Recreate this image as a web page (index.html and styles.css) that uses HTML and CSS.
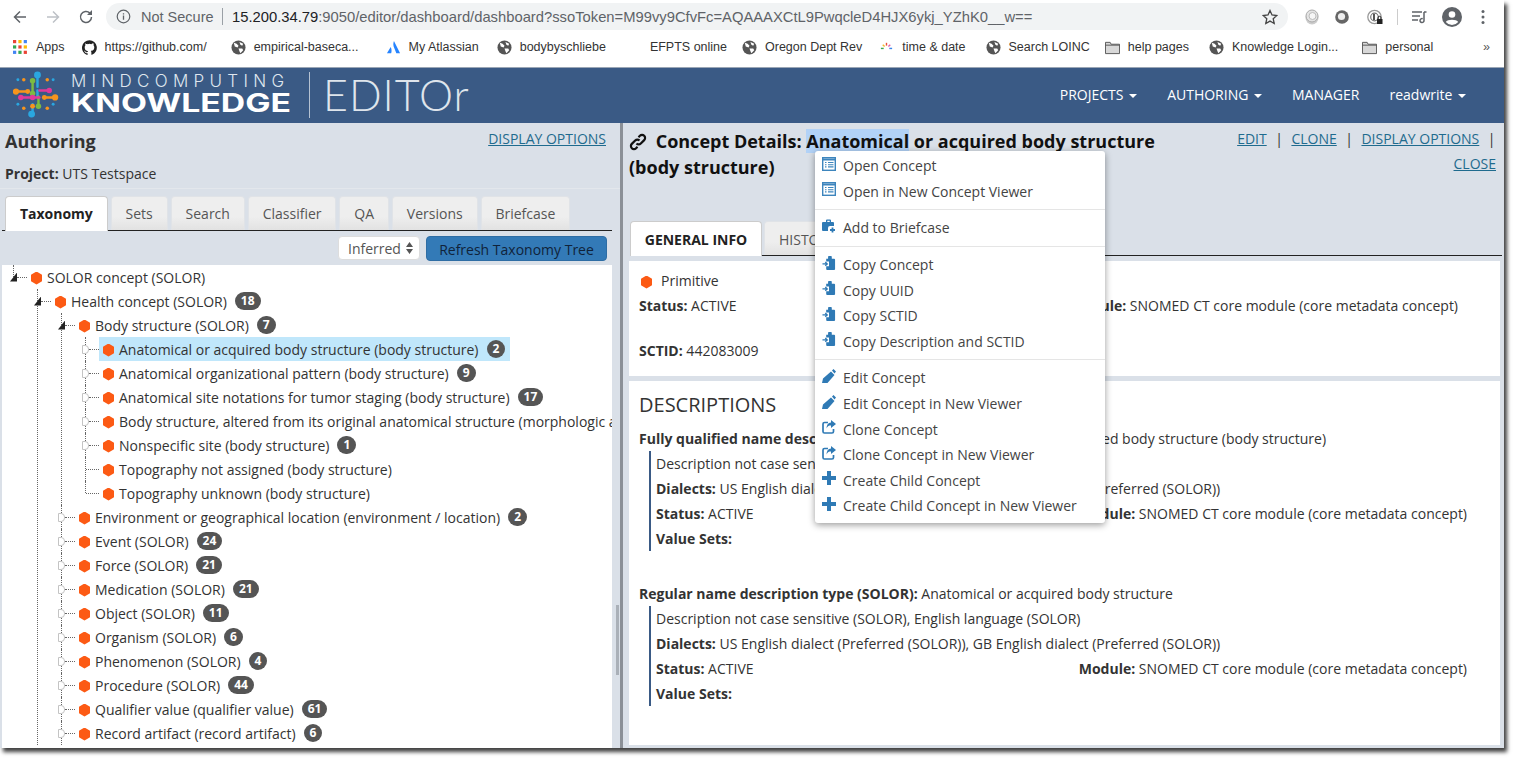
FILE: index.html
```html
<!DOCTYPE html>
<html lang="en">
<head>
  <meta charset="UTF-8">
  <meta name="viewport" content="width=device-width, initial-scale=1">
  <title>Knowledge Editor - Authoring</title>
  <link rel="stylesheet" href="styles.css">
</head>
<body>
  <svg class="defs" width="0" height="0">
    <symbol id="i-globe" viewBox="0 0 16 16">
      <circle cx="8" cy="8" r="7.500" fill="#555"/>
      <path d="M3 3l3 1 2 2-1 2-3-1zM9 2l4 2-1 2-2-1zM8 9l4 0 1 2-3 3-1-2z" fill="#fff"/>
    </symbol>
    <symbol id="i-folder" viewBox="0 0 16 14">
      <path d="M.5 1.500h5l1 2h9v10H.5z" fill="#d8d8d8" stroke="#555"/>
      <path d="M.5 4.500h15" stroke="#555"/>
    </symbol>
    <symbol id="i-list" viewBox="0 0 14 14">
      <rect x=".7" y=".7" width="12.600" height="12.600" fill="#fff" stroke="#3d85bd" stroke-width="1.400"/>
      <path d="M1 1.500h12v2H1z" fill="#3d85bd"/>
      <path d="M3 5.500h1.500M3 7.700h1.500M3 9.900h1.500M6 5.500h5.500M6 7.700h5.500M6 9.900h5.500" stroke="#3d85bd" stroke-width="1.100"/>
    </symbol>
    <symbol id="i-case" viewBox="0 0 14 14">
      <path d="M4 3V1.500a1 1 0 0 1 1-1h3a1 1 0 0 1 1 1V3h2a1 1 0 0 1 1 1v3H8a2 2 0 0 0-2 2v3H1a1 1 0 0 1-1-1V4a1 1 0 0 1 1-1zM5.300 3h2.400V1.800H5.300z" fill="#2f7ab5"/>
      <path d="M10.500 8.500v5M8 11h5" stroke="#2f7ab5" stroke-width="1.800"/>
    </symbol>
    <symbol id="i-copy" viewBox="0 0 14 15">
      <path d="M4 3h2V1.500a2 2 0 0 1 4 0V3h2.500a1 1 0 0 1 1 1v10a1 1 0 0 1-1 1H5a1 1 0 0 1-1-1v-3h3V6H4z" fill="#2f7ab5"/>
      <path d="M0 8.500h4.500M3 6.500l2.200 2-2.200 2" fill="none" stroke="#2f7ab5" stroke-width="1.300"/>
    </symbol>
    <symbol id="i-pencil" viewBox="0 0 14 14">
      <path d="M0 14l1-4.500 8-7 3.500 3.500-7 8zM10 1.500l1.500-1.500 2.500 2.500-1.500 2z" fill="#2f7ab5"/>
    </symbol>
    <symbol id="i-clone" viewBox="0 0 14 14">
      <path d="M11.500 9v2.500a1.500 1.500 0 0 1-1.500 1.500H2.500A1.500 1.500 0 0 1 1 11.500V4a1.500 1.500 0 0 1 1.500-1.500H6" fill="none" stroke="#2f7ab5" stroke-width="1.700"/>
      <path d="M9 0l5 4-5 4V5.500c-2 0-3.500.5-4.500 3C4.500 5 6 2.800 9 2.500z" fill="#2f7ab5"/>
    </symbol>
    <symbol id="i-plus" viewBox="0 0 14 14">
      <path d="M5 0h4v5h5v4H9v5H5V9H0V5h5z" fill="#2f7ab5"/>
    </symbol>
  </svg>

  <div class="window">
    <div class="toolbar">
      <svg class="tb-btn" viewBox="0 0 16 16"><path d="M14 8H3M8 2.500L2.500 8 8 13.500" fill="none" stroke="#5f6368" stroke-width="1.500"/></svg>
      <svg class="tb-btn" viewBox="0 0 16 16"><path d="M2 8h11M8 2.500L13.500 8 8 13.500" fill="none" stroke="#bdc1c6" stroke-width="1.500"/></svg>
      <svg class="tb-btn" viewBox="0 0 16 16"><path d="M13.500 8a5.500 5.500 0 1 1-1.600-3.900" fill="none" stroke="#5f6368" stroke-width="1.500"/><path d="M14 1v5H9z" fill="#5f6368"/></svg>
      <div class="omnibox">
        <svg class="omni-info" viewBox="0 0 16 16"><circle cx="8" cy="8" r="6.700" fill="none" stroke="#5f6368" stroke-width="1.300"/><path d="M8 7v4.500M8 4.500v1.300" stroke="#5f6368" stroke-width="1.400"/></svg>
        <span class="not-secure">Not Secure</span>
        <span class="omni-sep"></span>
        <span class="url"><b>15.200.34.79</b>:9050/editor/dashboard/dashboard?ssoToken=M99vy9CfvFc=AQAAAXCtL9PwqcleD4HJX6ykj_YZhK0__w==</span>
        <svg class="omni-star" viewBox="0 0 16 16"><path d="M8 1.500l2 4.500 4.800.5-3.600 3.200 1 4.800L8 12.100 3.800 14.500l1-4.800L1.200 6.500 6 6z" fill="none" stroke="#444" stroke-width="1.300"/></svg>
      </div>
      <div class="tb-right">
        <svg class="ext" viewBox="0 0 16 16"><circle cx="8" cy="9" r="6.500" fill="#ccc"/><circle cx="8" cy="7" r="6" fill="#e4e4e4" stroke="#aaa"/><circle cx="8.500" cy="7" r="3.500" fill="#f6f6f6" stroke="#bbb"/></svg>
        <svg class="ext ext-gap" viewBox="0 0 16 16"><circle cx="8" cy="8" r="6.800" fill="#666"/><circle cx="7.500" cy="7.500" r="3.600" fill="#eee"/></svg>
        <svg class="ext" viewBox="0 0 16 16"><circle cx="7.500" cy="8" r="6.700" fill="none" stroke="#999" stroke-width="1.300"/><circle cx="7.500" cy="8" r="3.800" fill="none" stroke="#777" stroke-width="1.200"/><path d="M7 5v6" stroke="#444" stroke-width="1.800"/><path d="M11 10V8.800a1.500 1.500 0 0 1 3 0V10" fill="none" stroke="#222"/><rect x="10" y="10" width="5.500" height="5" fill="#222"/></svg>
        <span class="tb-sep"></span>
        <svg class="ext ext-queue" viewBox="0 0 16 16"><path d="M1 3h10M1 7h8M1 11h6" stroke="#5f6368" stroke-width="1.500"/><path d="M13 3v8.500a2 2 0 1 1-1.300-1.800M13 3h2.500" fill="none" stroke="#5f6368" stroke-width="1.500"/></svg>
        <svg class="avatar" viewBox="0 0 20 20"><circle cx="10" cy="10" r="10" fill="#5f6368"/><circle cx="10" cy="7.500" r="3.300" fill="#fff"/><path d="M3.800 15c1.500-3 10.900-3 12.400 0a8 8 0 0 1-12.400 0z" fill="#fff"/></svg>
        <svg class="dots" viewBox="0 0 4 16"><circle cx="2" cy="2.500" r="1.500" fill="#5f6368"/><circle cx="2" cy="8" r="1.500" fill="#5f6368"/><circle cx="2" cy="13.500" r="1.500" fill="#5f6368"/></svg>
      </div>
    </div>

    <div class="bookmarks">
      <a class="bm"><svg class="bm-icon" viewBox="0 0 14 14"><path d="M0 0h3v3H0z" fill="#ea4335"/><path d="M5 0h3v3H5z" fill="#fbbc05"/><path d="M10 0h3v3h-3z" fill="#4285f4"/><path d="M0 5h3v3H0z" fill="#34a853"/><path d="M5 5h3v3H5z" fill="#ea4335"/><path d="M10 5h3v3h-3z" fill="#fbbc05"/><path d="M0 10h3v3H0z" fill="#4285f4"/><path d="M5 10h3v3H5z" fill="#34a853"/><path d="M10 10h3v3h-3z" fill="#ea4335"/></svg>Apps</a>
      <a class="bm"><svg class="bm-icon" viewBox="0 0 16 16"><path d="M8 .3a8 8 0 0 0-2.500 15.600c.4 0 .5-.2.500-.4v-1.400c-2.200.5-2.700-1-2.700-1-.4-.9-.9-1.200-.9-1.200-.7-.5.100-.5.100-.5.800.1 1.200.8 1.200.8.700 1.200 1.900.9 2.300.7.100-.5.300-.9.500-1.100-1.800-.2-3.600-.9-3.600-4 0-.9.300-1.600.8-2.100-.1-.2-.4-1 .1-2.100 0 0 .7-.2 2.200.8a7.500 7.500 0 0 1 4 0c1.500-1 2.200-.8 2.200-.8.400 1.100.2 1.900.1 2.100.5.600.8 1.300.8 2.100 0 3.100-1.900 3.700-3.700 3.900.3.300.6.700.6 1.500v2.200c0 .2.100.5.600.4A8 8 0 0 0 8 .3z" fill="#222"/></svg>https://github.com/</a>
      <a class="bm"><svg class="bm-icon"><use href="#i-globe"/></svg>empirical-baseca...</a>
      <a class="bm"><svg class="bm-icon" viewBox="0 0 16 16"><path d="M8.500 1c-1 2.500-1 5 .5 8l2 5h4zM5 7.500L1 14h4.500c.8-1.800.5-4.500-.5-6.500z" fill="#2684ff"/></svg>My Atlassian</a>
      <a class="bm"><svg class="bm-icon"><use href="#i-globe"/></svg>bodybyschliebe</a>
      <a class="bm bm-plain">EFPTS online</a>
      <a class="bm"><svg class="bm-icon"><use href="#i-globe"/></svg>Oregon Dept Rev</a>
      <a class="bm"><svg class="bm-icon" viewBox="0 0 16 16"><path d="M8 3v3" stroke="#e8503a" stroke-width="1.500"/><path d="M4 5l2 2" stroke="#f5b92e" stroke-width="1.500"/><path d="M12 5l-2 2" stroke="#e25db0" stroke-width="1.500"/><path d="M2 9h3" stroke="#3aa757" stroke-width="1.500"/><path d="M11 9h3" stroke="#3a85e8" stroke-width="1.500"/></svg>time &amp; date</a>
      <a class="bm"><svg class="bm-icon"><use href="#i-globe"/></svg>Search LOINC</a>
      <a class="bm"><svg class="bm-icon"><use href="#i-folder"/></svg>help pages</a>
      <a class="bm"><svg class="bm-icon"><use href="#i-globe"/></svg>Knowledge Login...</a>
      <a class="bm"><svg class="bm-icon"><use href="#i-folder"/></svg>personal</a>
      <span class="bm-more">»</span>
    </div>

    <nav class="navbar">
      <div class="brand">
        <svg class="brand-mark" viewBox="0 0 48 48">
          <g stroke-linecap="round" fill="none">
            <path d="M25 4v12M25 20v6" stroke="#2aa7e0" stroke-width="2.500"/>
            <path d="M20 10v13" stroke="#7dbb42" stroke-width="2.500"/>
            <path d="M26 26v10" stroke="#7dbb42" stroke-width="2.500"/>
            <path d="M3 21h12" stroke="#f7941d" stroke-width="2.500"/>
            <path d="M32 27h11" stroke="#f7941d" stroke-width="2.500"/>
            <path d="M8 27h12M27 20h10M20 27h7" stroke="#e0389a" stroke-width="2.500"/>
            <path d="M20 34v10" stroke="#2aa7e0" stroke-width="2.500"/>
          </g>
          <circle cx="25" cy="4" r="3.500" fill="#2aa7e0"/>
          <circle cx="20" cy="10" r="2.800" fill="#7dbb42"/>
          <circle cx="20" cy="23" r="2.800" fill="#7dbb42"/>
          <circle cx="26" cy="36" r="2.800" fill="#7dbb42"/>
          <circle cx="3" cy="21" r="3.200" fill="#f7941d"/>
          <circle cx="15" cy="21" r="2.500" fill="#f7941d"/>
          <circle cx="43" cy="27" r="3.200" fill="#f7941d"/>
          <circle cx="32" cy="27" r="2.500" fill="#f7941d"/>
          <circle cx="8" cy="27" r="2.800" fill="#e0389a"/>
          <circle cx="20" cy="27" r="2.800" fill="#e0389a"/>
          <circle cx="37" cy="20" r="2.800" fill="#e0389a"/>
          <circle cx="19" cy="44" r="3.500" fill="#2aa7e0"/>
          <circle cx="20" cy="36" r="2.500" fill="#f7941d"/>
          <circle cx="11" cy="9" r="1.800" fill="#f7941d"/><circle cx="35" cy="9" r="1.800" fill="#f7941d"/>
          <circle cx="5" cy="9" r="1.500" fill="#2aa7e0"/><circle cx="41" cy="9" r="1.500" fill="#2aa7e0"/>
          <circle cx="5" cy="34" r="1.500" fill="#2aa7e0"/><circle cx="41" cy="34" r="1.500" fill="#2aa7e0"/>
          <circle cx="11" cy="38" r="1.800" fill="#f7941d"/><circle cx="35" cy="38" r="1.800" fill="#f7941d"/>
        </svg>
        <div class="brand-text">
          <span class="brand-top">MINDCOMPUTING</span>
          <span class="brand-main">KNOWLEDGE</span>
        </div>
        <span class="brand-sep"></span>
        <span class="brand-app">EDITOr</span>
      </div>
      <div class="nav-links">
        <a>PROJECTS <i class="caret"></i></a>
        <a>AUTHORING <i class="caret"></i></a>
        <a>MANAGER</a>
        <a>readwrite <i class="caret"></i></a>
      </div>
    </nav>

    <main class="main">
      <section class="left">
        <div class="left-head">
          <h2>Authoring</h2>
          <a class="link">DISPLAY OPTIONS</a>
        </div>
        <p class="project"><b>Project:</b> UTS Testspace</p>
        <div class="tabs left-tabs">
          <a class="tab active">Taxonomy</a>
          <a class="tab">Sets</a>
          <a class="tab">Search</a>
          <a class="tab">Classifier</a>
          <a class="tab">QA</a>
          <a class="tab">Versions</a>
          <a class="tab">Briefcase</a>
        </div>
        <div class="tree-tools">
          <span class="select">Inferred <svg class="updown" viewBox="0 0 7 12"><path d="M3.500 0L7 5H0zM3.500 12L0 7h7z" fill="#555"/></svg></span>
          <button class="btn-refresh">Refresh Taxonomy Tree</button>
        </div>
        <div class="tree">
          <ul>
            <li class="end">
              <div class="row"><i class="tog open"></i><i class="dash"></i><span class="label"><i class="hex"></i>SOLOR concept (SOLOR)</span></div>
              <ul>
                <li>
                  <div class="row"><i class="tog open"></i><i class="dash"></i><span class="label"><i class="hex"></i>Health concept (SOLOR)<em class="badge">18</em></span></div>
                  <ul>
                    <li>
                      <div class="row"><i class="tog open"></i><i class="dash"></i><span class="label"><i class="hex"></i>Body structure (SOLOR)<em class="badge">7</em></span></div>
                      <ul>
                        <li><div class="row"><i class="tog"></i><i class="dash"></i><span class="label selected"><i class="hex"></i>Anatomical or acquired body structure (body structure)<em class="badge">2</em></span></div></li>
                        <li><div class="row"><i class="tog"></i><i class="dash"></i><span class="label"><i class="hex"></i>Anatomical organizational pattern (body structure)<em class="badge">9</em></span></div></li>
                        <li><div class="row"><i class="tog"></i><i class="dash"></i><span class="label"><i class="hex"></i>Anatomical site notations for tumor staging (body structure)<em class="badge">17</em></span></div></li>
                        <li><div class="row"><i class="tog"></i><i class="dash"></i><span class="label"><i class="hex"></i>Body structure, altered from its original anatomical structure (morphologic abnormality)</span></div></li>
                        <li><div class="row"><i class="tog"></i><i class="dash"></i><span class="label"><i class="hex"></i>Nonspecific site (body structure)<em class="badge">1</em></span></div></li>
                        <li><div class="row"><i class="dash leaf"></i><span class="label"><i class="hex"></i>Topography not assigned (body structure)</span></div></li>
                        <li class="end"><div class="row"><i class="dash leaf"></i><span class="label"><i class="hex"></i>Topography unknown (body structure)</span></div></li>
                      </ul>
                    </li>
                    <li><div class="row"><i class="tog"></i><i class="dash"></i><span class="label"><i class="hex"></i>Environment or geographical location (environment / location)<em class="badge">2</em></span></div></li>
                    <li><div class="row"><i class="tog"></i><i class="dash"></i><span class="label"><i class="hex"></i>Event (SOLOR)<em class="badge">24</em></span></div></li>
                    <li><div class="row"><i class="tog"></i><i class="dash"></i><span class="label"><i class="hex"></i>Force (SOLOR)<em class="badge">21</em></span></div></li>
                    <li><div class="row"><i class="tog"></i><i class="dash"></i><span class="label"><i class="hex"></i>Medication (SOLOR)<em class="badge">21</em></span></div></li>
                    <li><div class="row"><i class="tog"></i><i class="dash"></i><span class="label"><i class="hex"></i>Object (SOLOR)<em class="badge">11</em></span></div></li>
                    <li><div class="row"><i class="tog"></i><i class="dash"></i><span class="label"><i class="hex"></i>Organism (SOLOR)<em class="badge">6</em></span></div></li>
                    <li><div class="row"><i class="tog"></i><i class="dash"></i><span class="label"><i class="hex"></i>Phenomenon (SOLOR)<em class="badge">4</em></span></div></li>
                    <li><div class="row"><i class="tog"></i><i class="dash"></i><span class="label"><i class="hex"></i>Procedure (SOLOR)<em class="badge">44</em></span></div></li>
                    <li><div class="row"><i class="tog"></i><i class="dash"></i><span class="label"><i class="hex"></i>Qualifier value (qualifier value)<em class="badge">61</em></span></div></li>
                    <li><div class="row"><i class="tog"></i><i class="dash"></i><span class="label"><i class="hex"></i>Record artifact (record artifact)<em class="badge">6</em></span></div></li>
                  </ul>
                </li>
              </ul>
            </li>
          </ul>
        </div>
      </section>

      <div class="splitter"><i class="split-thumb"></i></div>

      <section class="right">
        <div class="right-head">
          <h1 class="concept-title">
            <svg class="link-icon" viewBox="0 0 18 18"><path d="M7.500 10.500a3 3 0 0 0 4.300 0l3.400-3.400a3 3 0 0 0-4.300-4.300L9.500 4.200M10.500 7.500a3 3 0 0 0-4.300 0l-3.400 3.400a3 3 0 0 0 4.300 4.300l1.400-1.400" fill="none" stroke="#111" stroke-width="2.200"/></svg>
            Concept Details: <mark>Anatomical</mark> or acquired body structure (body structure)
          </h1>
          <div class="concept-actions">
            <div><a class="link">EDIT</a><span>|</span><a class="link">CLONE</a><span>|</span><a class="link">DISPLAY OPTIONS</a><span class="bar-last">|</span></div>
            <div><a class="link">CLOSE</a></div>
          </div>
        </div>
        <div class="tabs right-tabs">
          <a class="tab active">GENERAL INFO</a>
          <a class="tab">HISTORY</a>
        </div>
        <div class="card card-info">
          <p class="prim"><i class="hex"></i>Primitive</p>
          <div class="pair"><p><b>Status:</b> ACTIVE</p><p class="mod"><b>Module:</b> SNOMED CT core module (core metadata concept)</p></div>
          <p class="sctid"><b>SCTID:</b> 442083009</p>
        </div>
        <div class="card card-desc">
          <h3>DESCRIPTIONS</h3>
          <p class="desc-name"><b>Fully qualified name description type (SOLOR):</b> Anatomical or acquired body structure (body structure)</p>
          <div class="desc-block">
            <p>Description not case sensitive (SOLOR), English language (SOLOR)</p>
            <p><b>Dialects:</b> US English dialect (Preferred (SOLOR)), GB English dialect (Preferred (SOLOR))</p>
            <div class="pair"><p><b>Status:</b> ACTIVE</p><p class="mod"><b>Module:</b> SNOMED CT core module (core metadata concept)</p></div>
            <p><b>Value Sets:</b></p>
          </div>
          <p class="desc-name second"><b>Regular name description type (SOLOR):</b> Anatomical or acquired body structure</p>
          <div class="desc-block">
            <p>Description not case sensitive (SOLOR), English language (SOLOR)</p>
            <p><b>Dialects:</b> US English dialect (Preferred (SOLOR)), GB English dialect (Preferred (SOLOR))</p>
            <div class="pair"><p><b>Status:</b> ACTIVE</p><p class="mod"><b>Module:</b> SNOMED CT core module (core metadata concept)</p></div>
            <p><b>Value Sets:</b></p>
          </div>
        </div>
      </section>

      <ul class="ctx-menu">
        <li><svg><use href="#i-list"/></svg>Open Concept</li>
        <li><svg><use href="#i-list"/></svg>Open in New Concept Viewer</li>
        <li class="sep"></li>
        <li><svg><use href="#i-case"/></svg>Add to Briefcase</li>
        <li class="sep"></li>
        <li><svg><use href="#i-copy"/></svg>Copy Concept</li>
        <li><svg><use href="#i-copy"/></svg>Copy UUID</li>
        <li><svg><use href="#i-copy"/></svg>Copy SCTID</li>
        <li><svg><use href="#i-copy"/></svg>Copy Description and SCTID</li>
        <li class="sep"></li>
        <li><svg><use href="#i-pencil"/></svg>Edit Concept</li>
        <li><svg><use href="#i-pencil"/></svg>Edit Concept in New Viewer</li>
        <li><svg><use href="#i-clone"/></svg>Clone Concept</li>
        <li><svg><use href="#i-clone"/></svg>Clone Concept in New Viewer</li>
        <li><svg><use href="#i-plus"/></svg>Create Child Concept</li>
        <li><svg><use href="#i-plus"/></svg>Create Child Concept in New Viewer</li>
      </ul>
    </main>
  </div>
</body>
</html>
```

FILE: styles.css
```css
* { box-sizing: border-box; margin:0; padding:0; }
html, body { height:100%; overflow:hidden; background:#fff; }
body { font-family:"Open Sans", Arial, sans-serif; font-size:14px; color:#333; }
ul { list-style:none; }
i, em { font-style:normal; }
.defs { position:absolute; }

.window { width:1504px; height:748px; display:flex; flex-direction:column; background:#fff; box-shadow:3px 4px 4px rgba(0,0,0,.75); overflow:hidden; }

/* browser chrome */
.toolbar { height:33px; flex:none; display:flex; align-items:center; padding-left:12px; font-family:"Liberation Sans", Arial, sans-serif; }
.tb-btn { width:16px; height:16px; margin-right:17px; flex:none; }
.omnibox { width:1182px; margin-left:-5px; height:27px; border-radius:14px; background:#f1f3f4; display:flex; align-items:center; padding-left:10px; font-size:14.500px; color:#5f6368; flex:none; }
.omni-info { width:15px; height:15px; margin-right:10px; }
.not-secure { width:73px; white-space:nowrap; }
.omni-sep { width:1px; height:17px; background:#9aa0a6; margin:0 9px 0 8px; }
.url { white-space:nowrap; flex:1; font-size:14.780px; }
.url b { font-weight:400; color:#202124; }
.omni-star { width:16px; height:16px; margin-right:10px; }
.tb-right { flex:1; display:flex; align-items:center; padding-left:16px; }
.ext { width:16px; height:16px; margin-right:14px; flex:none; }
.ext-gap { margin-right:17px; }
.tb-sep { width:1px; height:16px; background:#ccc; margin-right:13px; flex:none; }
.ext-queue { margin-right:15px; }
.avatar { width:20px; height:20px; flex:none; }
.dots { width:4px; height:16px; margin-left:19px; flex:none; }

.bookmarks { height:34px; flex:none; display:flex; align-items:center; padding:0 14px 6px 13px; font-family:"Liberation Sans", Arial, sans-serif; font-size:12.500px; color:#333; white-space:nowrap; }
.bm { display:flex; align-items:center; margin-right:17px; }
.bm-icon { width:15px; height:15px; margin-right:8px; flex:none; }
/* chrome spaces these by its own clipped widths */
.bm:nth-child(2) { margin-right:24px; }
.bm:nth-child(3) { margin-right:27px; }
.bm:nth-child(4) { margin-right:18px; }
.bm:nth-child(5) { margin-right:20px; }
.bm:nth-child(6) { margin-right:15px; }
.bm:nth-child(8) { margin-right:20px; }
.bm:nth-child(9) { margin-right:15px; }
.bm:nth-child(10) { margin-right:20px; }
.bm:nth-child(11) { margin-right:24px; }
.bm-plain { margin-left:24px; }
.bm-more { margin-left:auto; color:#555; }

.navbar { height:56px; flex:none; background:#3a5a85; border-top:1px solid #9aa6b5; display:flex; align-items:center; justify-content:space-between; padding:0 38px 2px 13px; color:#fff; }
.brand { display:flex; align-items:center; }
.brand-mark { width:47px; height:47px; margin-right:11px; flex:none; }
.brand-text { display:flex; flex-direction:column; width:219px; font-family:Inter, Arial, sans-serif; line-height:1; }
.brand-top { font-size:17px; font-weight:300; letter-spacing:5.300px; color:#dfe6ee; white-space:nowrap; }
.brand-main { font-size:25px; font-weight:700; margin-top:1px; white-space:nowrap; transform:scaleX(1.350); transform-origin:left center; }
.brand-sep { width:1px; height:46px; background:#b5c2d2; margin:0 13px 0 19px; }
.brand-app { font-family:Lato, Arial, sans-serif; font-weight:300; font-size:43px; line-height:1; letter-spacing:1px; color:#dfe5ec; }
.nav-links { display:flex; gap:30px; font-size:14px; }
.caret { display:inline-block; width:0; height:0; border-top:4px solid #fff; border-left:4px solid transparent; border-right:4px solid transparent; vertical-align:middle; margin-left:2px; }

/* main split */
.main { flex:1; min-height:0; position:relative; display:flex; background:#dae0e8; }
.left { width:620px; flex:none; display:flex; flex-direction:column; min-height:0; }
.splitter { width:3px; flex:none; background:#8b9097; position:relative; }
.split-thumb { position:absolute; left:-4px; top:482px; width:3px; height:70px; background:#aab0b8; }
.right { flex:1; min-width:0; display:flex; flex-direction:column; padding:0 4px 3px 6px; }

.link { color:#1f6b8e; text-decoration:underline; }

.left-head { display:flex; justify-content:space-between; padding:6px 14px 0 5px; height:36px; }
.left-head h2 { font-size:18px; font-weight:700; color:#333; line-height:24px; }
.project { height:30px; padding:5px 0 0 5px; line-height:20px; border-bottom:1px solid #e3e7ec; }

.tabs { display:flex; flex:none; border-bottom:1px solid #222; }
.tab { height:34px; line-height:33px; background:linear-gradient(#eeeeee 60%, #e2e2e2); color:#555; border:1px solid #e0e3e7; border-bottom:0; border-radius:4px 4px 0 0; text-align:center; white-space:nowrap; }
.tab.active { background:#fff; color:#222; font-weight:700; border-color:#ccc; height:35px; margin-bottom:-1px; }
.left-tabs { margin:7px 8px 0 2px; padding-left:3px; gap:3px; }
.left-tabs .tab { padding:0 13.900px; }

.tree-tools { height:34px; flex:none; display:flex; justify-content:flex-end; align-items:flex-start; gap:6px; padding:5px 13px 0 0; }
.select { width:82px; height:24px; background:#fff; border:1px solid #ddd; border-radius:4px; display:flex; align-items:center; padding-left:9px; color:#555; gap:5px; }
.updown { width:7px; height:12px; }
.btn-refresh { width:181px; height:25px; padding-top:2px; background:#337ab7; color:#10233a; border:1px solid #2e6da4; border-radius:4px; font:14px "Open Sans", Arial, sans-serif; }

.tree { flex:1; min-height:0; width:610px; margin-left:2px; background:#fff; overflow:hidden; padding-left:11px; white-space:nowrap; }
.tree ul ul { margin-left:24px; }
.tree li { position:relative; }
.tree li::before { content:""; position:absolute; left:0; top:0; bottom:0; border-left:1px dotted #666; }
.tree li.end::before { bottom:auto; height:12px; }
.row { height:24px; display:flex; align-items:center; position:relative; }
.tog { width:7px; height:9px; margin-left:-3px; flex:none; background:#fff; border:1px solid #c4c4c4; border-radius:0 4px 4px 0; position:relative; }
.tog.open { background:#222; border:0; border-radius:0; clip-path:polygon(100% 0, 100% 100%, 0 100%); }
.dash { width:10px; flex:none; border-top:1px dotted #666; }
.dash.leaf { width:13px; margin-left:1px; }
.label { display:flex; align-items:center; height:24px; padding:0 5px 0 4px; }
.label.selected { background:#c0e7fb; }
.hex { display:inline-block; width:11px; height:13px; flex:none; background:#fc5a14; clip-path:polygon(50% 0, 100% 25%, 100% 75%, 50% 100%, 0 75%, 0 25%); margin-right:5px; position:relative; top:1px; }
.badge { min-width:18px; height:18px; line-height:18px; border-radius:9px; background:#555; color:#fff; font-size:12px; font-weight:700; text-align:center; padding:0 6px; margin-left:8px; }

/* right side */
.right-head { display:flex; height:98px; flex:none; }
.concept-title { width:561px; flex:none; padding-top:5px; font-size:18px; line-height:26px; font-weight:700; color:#111; }
.link-icon { width:18px; height:18px; vertical-align:-3px; margin-right:4px; }
.concept-title mark { background:#b2d2f7; color:inherit; }
.concept-actions { flex:1; padding-top:3px; text-align:right; line-height:25px; margin-right:4px; white-space:nowrap; }
.concept-actions span { margin:0 8.500px; color:#333; }
.concept-actions .bar-last { margin-right:.5px; }

.right-tabs { margin:0 -2px 0 1px; gap:2px; }
.right-tabs .tab { padding:0 14px; line-height:35px; }
.right-tabs .tab.active { width:132px; padding:0; }

.card { background:#fff; }
.card-info { height:115px; margin-top:5px; padding:9px 10px 0 10px; line-height:25px; }
.pair { display:flex; }
.pair .mod { margin-left:auto; }
.card-info .pair .mod { margin-right:32px; }
.prim { height:22px; display:flex; align-items:center; line-height:22px; }
.prim .hex { margin:0 9px 0 2px; }
.card-info .pair { margin-top:1px; }
.sctid { margin-top:20px; }

.card-desc { flex:1; min-height:0; margin-top:5px; padding:11px 10px 0 10px; overflow:hidden; }
.card-desc h3 { font-size:20px; font-weight:400; line-height:26px; color:#333; }
.desc-name { margin-top:11px; line-height:20px; }
.desc-name.second { margin-top:33px; }
.desc-block { margin:2px 0 0 10px; border-left:2px solid #3a5a85; padding-left:5px; line-height:25px; }
.desc-block .pair .mod { margin-right:23px; }

/* context menu */
.ctx-menu { position:absolute; left:815px; top:28px; width:290px; padding:2px 0 4px; background:#fff; border-radius:3px; box-shadow:0 2px 7px rgba(0,0,0,.4); color:#444; }
.ctx-menu li { height:25.600px; display:flex; align-items:center; padding-left:7px; white-space:nowrap; }
.ctx-menu li svg { width:14px; height:14px; margin-right:7px; flex:none; position:relative; top:-2px; }
.ctx-menu li.sep { height:1px; background:#e5e5e5; margin:5px 0; padding:0; }
```
